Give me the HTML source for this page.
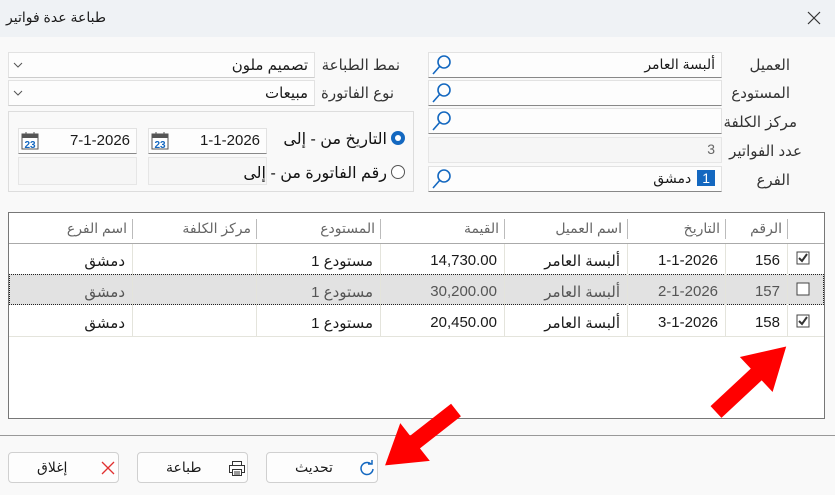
<!DOCTYPE html>
<html><head><meta charset="utf-8"><style>
*{box-sizing:border-box;margin:0;padding:0}
body{width:835px;height:495px;background:#f9f9f9;font-family:"Liberation Sans","DejaVu Sans",sans-serif;font-size:14px;color:#1a1a1a;position:relative;overflow:hidden}
.a{position:absolute}
.title{left:0;top:0;width:835px;height:37px;background:#eff2f5}
.inp{position:absolute;background:#fdfdfd;border:1px solid #e2e2e2;border-bottom:1px solid #888;height:26px;direction:rtl;padding:3px 6px 0 0;white-space:nowrap;font-size:14px}
.ro{background:#f6f6f6;border:1px solid #e6e6e6;color:#666}
.lbl{position:absolute;direction:rtl;text-align:right;white-space:nowrap;color:#333;font-size:14px}
.grid{left:8px;top:212px;width:817px;height:207px;background:#fff;border:1px solid #777}
.cell{position:absolute;direction:rtl;text-align:right;padding-right:6px;white-space:nowrap;font-size:14px}
.btn{position:absolute;top:452px;height:31px;background:#fdfdfd;border:1px solid #d0d0d0;border-radius:4px;font-size:14px}
</style></head><body>
<div class="a title"></div>
<div class="a" style="left:6px;top:9px;font-size:14px;direction:rtl">طباعة عدة فواتير</div>
<svg class="a" style="left:806px;top:10px" width="16" height="16"><path d="M2 2L14 14M14 2L2 14" stroke="#333" stroke-width="1.2"/></svg>

<div class="inp" style="left:428px;top:52px;width:294px">ألبسة العامر</div>
<div class="inp" style="left:428px;top:80px;width:294px"></div>
<div class="inp" style="left:428px;top:108px;width:294px"></div>
<div class="inp ro" style="left:428px;top:137px;width:294px">3</div>
<div class="inp" style="left:428px;top:166px;width:294px"><span style="background:#1468c0;color:#fff;padding:0 5px;margin-left:6px">1</span>دمشق</div>
<svg class="a" style="left:431px;top:54px" width="22" height="138">
<g fill="none" stroke="#1468c0" stroke-width="1.6">
<circle cx="13" cy="8" r="6"/><path d="M9 12L2 20"/>
<circle cx="13" cy="36" r="6"/><path d="M9 40L2 48"/>
<circle cx="13" cy="64" r="6"/><path d="M9 68L2 76"/>
<circle cx="13" cy="122" r="6"/><path d="M9 126L2 134"/>
</g></svg>
<div class="lbl" style="right:45px;top:56px;font-size:15px">العميل</div>
<div class="lbl" style="right:45px;top:84px;font-size:15px">المستودع</div>
<div class="lbl" style="right:38px;top:113px;font-size:15px">مركز الكلفة</div>
<div class="lbl" style="right:33px;top:142px;font-size:15px">عدد الفواتير</div>
<div class="lbl" style="right:45px;top:171px;font-size:15px">الفرع</div>

<div class="inp" style="left:8px;top:52px;width:307px;border-bottom-color:#ccc;font-size:15px">تصميم ملون</div>
<div class="inp" style="left:8px;top:80px;width:307px;border-bottom-color:#ccc;font-size:15px">مبيعات</div>
<svg class="a" style="left:13px;top:60px" width="12" height="40"><path d="M1 3L5 7L9 3M1 31L5 35L9 31" fill="none" stroke="#555"/></svg>
<div class="lbl" style="right:435px;top:56px;font-size:15px">نمط الطباعة</div>
<div class="lbl" style="right:441px;top:84px;font-size:15px">نوع الفاتورة</div>

<div class="a" style="left:8px;top:111px;width:406px;height:81px;border:1px solid #ddd"></div>
<div class="inp" style="left:148px;top:128px;width:119px;font-size:15px">1-1-2026</div>
<div class="inp" style="left:18px;top:128px;width:119px;font-size:15px">7-1-2026</div>
<div class="inp ro" style="left:148px;top:157px;width:119px;height:28px"></div>
<div class="inp ro" style="left:18px;top:157px;width:119px;height:28px"></div>
<svg class="a" style="left:151px;top:131px" width="20" height="20"><rect x="1" y="3" width="16" height="15" fill="#fff" stroke="#555"/><rect x="1" y="3" width="16" height="4" fill="#555"/><path d="M5 1v4M13 1v4" stroke="#555"/><text x="9" y="17" font-size="10" font-weight="bold" fill="#1468c0" text-anchor="middle" font-family="Liberation Sans">23</text></svg>
<svg class="a" style="left:21px;top:131px" width="20" height="20"><rect x="1" y="3" width="16" height="15" fill="#fff" stroke="#555"/><rect x="1" y="3" width="16" height="4" fill="#555"/><path d="M5 1v4M13 1v4" stroke="#555"/><text x="9" y="17" font-size="10" font-weight="bold" fill="#1468c0" text-anchor="middle" font-family="Liberation Sans">23</text></svg>
<svg class="a" style="left:390px;top:130px" width="16" height="50"><circle cx="8" cy="8" r="7" fill="#1468c0"/><circle cx="8" cy="8" r="3" fill="#fff"/><circle cx="8" cy="42" r="6.5" fill="#fff" stroke="#555"/></svg>
<div class="lbl" style="right:448px;top:129px;font-size:16px;color:#111">التاريخ من - إلى</div>
<div class="lbl" style="right:448px;top:163px;font-size:16px;color:#111;width:148px;overflow:hidden">رقم الفاتورة من - إلى</div>

<div class="a grid"></div>
<div class="a" style="left:9px;top:243px;width:815px;height:1px;background:#aaa"></div>
<div class="a" style="left:9px;top:274px;width:815px;height:31px;background:#e2e2e2;border:1px dotted #222"></div>
<div class="a" style="left:9px;top:336px;width:815px;height:1px;background:#e4e4dc"></div>
<div class="a" style="left:787px;top:219px;width:1px;height:20px;background:#bbb"></div>
<div class="a" style="left:725px;top:219px;width:1px;height:20px;background:#bbb"></div>
<div class="a" style="left:627px;top:219px;width:1px;height:20px;background:#bbb"></div>
<div class="a" style="left:504px;top:219px;width:1px;height:20px;background:#bbb"></div>
<div class="a" style="left:380px;top:219px;width:1px;height:20px;background:#bbb"></div>
<div class="a" style="left:256px;top:219px;width:1px;height:20px;background:#bbb"></div>
<div class="a" style="left:132px;top:219px;width:1px;height:20px;background:#bbb"></div>
<div class="a" style="left:787px;top:244px;width:1px;height:92px;background:#e4e4dc"></div>
<div class="a" style="left:725px;top:244px;width:1px;height:92px;background:#e4e4dc"></div>
<div class="a" style="left:627px;top:244px;width:1px;height:92px;background:#e4e4dc"></div>
<div class="a" style="left:504px;top:244px;width:1px;height:92px;background:#e4e4dc"></div>
<div class="a" style="left:380px;top:244px;width:1px;height:92px;background:#e4e4dc"></div>
<div class="a" style="left:256px;top:244px;width:1px;height:92px;background:#e4e4dc"></div>
<div class="a" style="left:132px;top:244px;width:1px;height:92px;background:#e4e4dc"></div>

<div class="cell" style="right:47px;top:220px;color:#666">الرقم</div>
<div class="cell" style="right:109px;top:220px;color:#666">التاريخ</div>
<div class="cell" style="right:207px;top:220px;color:#666">اسم العميل</div>
<div class="cell" style="right:330px;top:220px;color:#666">القيمة</div>
<div class="cell" style="right:454px;top:220px;color:#666">المستودع</div>
<div class="cell" style="right:578px;top:220px;color:#666">مركز الكلفة</div>
<div class="cell" style="right:702px;top:220px;color:#666">اسم الفرع</div>

<svg class="a" style="left:796px;top:251px" width="16" height="80"><g fill="#fff" stroke="#444"><rect x="1" y="1" width="12" height="12"/><rect x="1" y="32" width="12" height="12"/><rect x="1" y="64" width="12" height="12"/></g><path d="M3 7L6 10L11 3M3 70L6 73L11 66" fill="none" stroke="#333" stroke-width="2"/></svg>

<div class="cell" style="right:49px;top:252px;font-size:15px">156</div>
<div class="cell" style="right:111px;top:252px;font-size:15px">1-1-2026</div>
<div class="cell" style="right:209px;top:252px;font-size:15px">ألبسة العامر</div>
<div class="cell" style="right:332px;top:252px;font-size:15px">14,730.00</div>
<div class="cell" style="right:456px;top:252px;font-size:15px">مستودع 1</div>
<div class="cell" style="right:704px;top:252px;font-size:15px">دمشق</div>
<div class="cell" style="right:49px;top:283px;color:#555;font-size:15px">157</div>
<div class="cell" style="right:111px;top:283px;color:#555;font-size:15px">2-1-2026</div>
<div class="cell" style="right:209px;top:283px;color:#555;font-size:15px">ألبسة العامر</div>
<div class="cell" style="right:332px;top:283px;color:#555;font-size:15px">30,200.00</div>
<div class="cell" style="right:456px;top:283px;color:#555;font-size:15px">مستودع 1</div>
<div class="cell" style="right:704px;top:283px;color:#555;font-size:15px">دمشق</div>
<div class="cell" style="right:49px;top:314px;font-size:15px">158</div>
<div class="cell" style="right:111px;top:314px;font-size:15px">3-1-2026</div>
<div class="cell" style="right:209px;top:314px;font-size:15px">ألبسة العامر</div>
<div class="cell" style="right:332px;top:314px;font-size:15px">20,450.00</div>
<div class="cell" style="right:456px;top:314px;font-size:15px">مستودع 1</div>
<div class="cell" style="right:704px;top:314px;font-size:15px">دمشق</div>

<div class="a" style="left:0;top:435px;width:835px;height:1px;background:#999"></div>

<div class="btn" style="left:8px;width:111px"><span class="a" style="left:28px;top:6px">إغلاق</span>
<svg class="a" style="left:92px;top:8px" width="14" height="14"><path d="M1 1L13 13M13 1L1 13" stroke="#e03030" stroke-width="1.3"/></svg></div>
<div class="btn" style="left:137px;width:111px"><span class="a" style="left:28px;top:6px">طباعة</span>
<svg class="a" style="left:90px;top:7px" width="18" height="17" fill="none" stroke="#333"><rect x="4.5" y="1.5" width="9" height="4"/><rect x="1.5" y="5.5" width="15" height="7"/><rect x="4.5" y="9.5" width="9" height="6" fill="#fff"/><path d="M6 12h6M6 14h6"/></svg></div>
<div class="btn" style="left:266px;width:112px"><span class="a" style="left:28px;top:6px">تحديث</span>
<svg class="a" style="left:92px;top:7px" width="17" height="17" fill="none" stroke="#1468c0" stroke-width="1.5"><path d="M14 9A6 6 0 1 1 12 4"/><path d="M9 4h4V0"/></svg></div>

<svg class="a" style="left:0;top:0" width="835" height="495">
<polygon points="0,-8 55,-8 55,-24 96,0 55,24 55,8 0,8" fill="#ff0000" transform="translate(716,412) rotate(-43)"/>
<polygon points="0,-8 52,-8 52,-24 90,0 52,24 52,8 0,8" fill="#ff0000" transform="translate(456,410) rotate(142)"/>
</svg>
</body></html>
